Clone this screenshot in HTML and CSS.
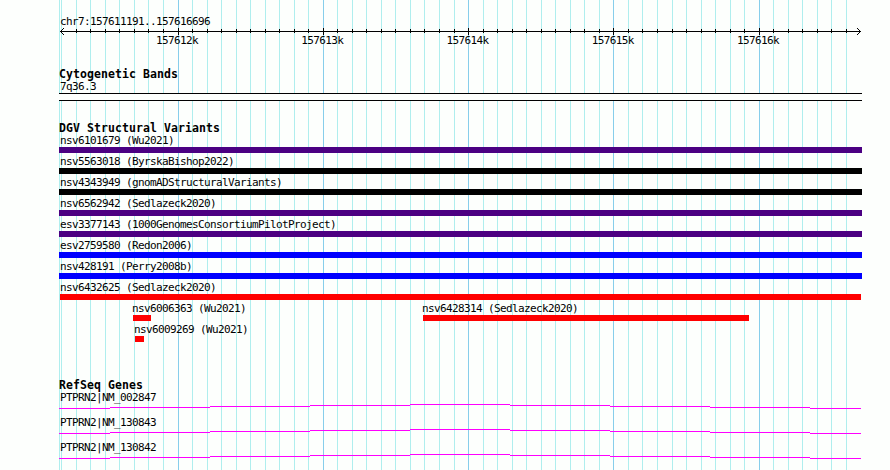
FILE: index.html
```html
<!DOCTYPE html>
<html lang="en">
<head>
<meta charset="utf-8">
<title>chr7:157611191..157616696</title>
<link rel="stylesheet" href="styles.css">
</head>
<body>
<main class="browser">
  <svg class="grid" width="890" height="470" shape-rendering="crispEdges" aria-hidden="true">
    <path class="minor" id="minor"/>
    <path class="major" id="major"/>
  </svg>

  <header class="ruler">
    <div class="label">chr7:157611191..157616696</div>
    <svg class="axis" width="803" height="9" shape-rendering="crispEdges" aria-hidden="true">
      <path id="ticks"/>
      <path d="M1 4.5H802"/>
      <path d="M2 3h1v1H2zM3 2h1v1H3zM4 1h1v1H4zM2 5h1v1H2zM3 6h1v1H3zM4 7h1v1H4zM800 3h1v1h-1zM799 2h1v1h-1zM798 1h1v1h-1zM800 5h1v1h-1zM799 6h1v1h-1zM798 7h1v1h-1z" class="head"/>
    </svg>
    <div class="scale label"><span>157612k</span><span>157613k</span><span>157614k</span><span>157615k</span><span>157616k</span></div>
  </header>

  <section class="track bands">
    <h2>Cytogenetic Bands</h2>
    <div class="label">7q36.3</div>
    <div class="band"></div>
  </section>

  <section class="track variants">
    <h2>DGV Structural Variants</h2>
    <div class="row"><div class="feature purple"><span class="label">nsv6101679 (Wu2021)</span></div></div>
    <div class="row"><div class="feature black"><span class="label">nsv5563018 (ByrskaBishop2022)</span></div></div>
    <div class="row"><div class="feature black"><span class="label">nsv4343949 (gnomADStructuralVariants)</span></div></div>
    <div class="row"><div class="feature purple"><span class="label">nsv6562942 (Sedlazeck2020)</span></div></div>
    <div class="row"><div class="feature purple"><span class="label">esv3377143 (1000GenomesConsortiumPilotProject)</span></div></div>
    <div class="row"><div class="feature blue"><span class="label">esv2759580 (Redon2006)</span></div></div>
    <div class="row"><div class="feature blue"><span class="label">nsv428191 (Perry2008b)</span></div></div>
    <div class="row"><div class="feature red" style="margin-left:1px;width:801px"><span class="label flush">nsv6432625 (Sedlazeck2020)</span></div></div>
    <div class="row"><div class="feature red" style="margin-left:74px;width:18px"><span class="label hang">nsv6006363 (Wu2021)</span></div><div class="feature red" style="margin-left:272px;width:326px"><span class="label hang">nsv6428314 (Sedlazeck2020)</span></div></div>
    <div class="row"><div class="feature red" style="margin-left:76px;width:9px"><span class="label hang">nsv6009269 (Wu2021)</span></div></div>
  </section>

  <section class="track genes">
    <h2>RefSeq Genes</h2>
    <div class="gene"><div class="label">PTPRN2|NM_002847</div><svg width="803" height="7" shape-rendering="crispEdges"><path class="intron"/></svg></div>
    <div class="gene"><div class="label">PTPRN2|NM_130843</div><svg width="803" height="7" shape-rendering="crispEdges"><path class="intron"/></svg></div>
    <div class="gene"><div class="label">PTPRN2|NM_130842</div><svg width="803" height="7" shape-rendering="crispEdges"><path class="intron"/></svg></div>
  </section>
</main>
<script src="tracks.js"></script>
</body>
</html>
```
FILE: styles.css
```css
* { box-sizing: border-box; }
body {
  margin: 0;
  background: #fdfffd;
  color: #000;
}
.browser {
  position: relative;
  width: 890px;
  height: 470px;
  padding: 15px 28px 0 59px;
  overflow: hidden;
}
.grid {
  position: absolute;
  left: 0;
  top: 0;
}
.minor { stroke: #afeeee; }
.major { stroke: #87ceeb; }
svg { display: block; }
.ruler, .track { position: relative; }
.label {
  display: block;
  height: 12px;
  padding-left: 1px;
  font: 11px/12px "DejaVu Sans Mono", monospace;
  letter-spacing: -0.622px;
  white-space: pre;
}
h2 {
  height: 13px;
  margin: 0;
  font: bold 11.5px/13px "DejaVu Sans Mono", monospace;
  letter-spacing: 0.077px;
  white-space: pre;
}
.axis { stroke: #000; }
.head { fill: #000; stroke: none; }
.ruler {
  height: 53px;
  padding-top: 1px;
}
.ruler .label:first-child { height: 11px; }
.ruler .scale {
  display: flex;
  justify-content: space-between;
  width: 623px;
  margin: -1px 0 0 97px;
  padding: 0;
}
.bands { height: 54px; }
.band {
  width: 803px;
  height: 8px;
  border: solid #000;
  border-width: 1px 0;
  background: #fdfffd;
}
.variants { height: 257px; }
.row {
  display: flex;
  height: 21px;
}
.feature {
  width: 803px;
  height: 18px;
  border-bottom: 6px solid;
}
.flush { padding-left: 0; }
.hang {
  padding-left: 0;
  margin-left: -1px;
}
.purple { border-color: #4b0082; }
.black { border-color: #000; }
.blue { border-color: #00f; }
.red { border-color: #f00; }
.gene { height: 25px; }
.intron { fill: none; stroke: #f0f; }
```
FILE: tracks.js
```js
const major = [178, 323, 468, 613, 759];
const minor = [76, 90, 105, 119, 134, 148, 163, 192, 207, 221, 236, 250, 265, 279, 294, 308,
  337, 352, 366, 381, 395, 410, 424, 439, 454, 483, 497, 512, 526, 541, 555, 570, 584, 599,
  628, 642, 657, 672, 686, 701, 715, 730, 744, 773, 788, 802, 817, 831, 846];
const left = 59;
const columns = (xs, y, h) => xs.map(x => `M${x + 0.5} ${y}v${h}`).join('');

document.getElementById('minor').setAttribute('d', columns([59, 61, ...minor], 0, 470));
document.getElementById('major').setAttribute('d', columns(major, 0, 470));
document.getElementById('ticks').setAttribute('d',
  columns(minor.map(x => x - left), 2, 4) + columns(major.map(x => x - left), 1, 7));

// Introns are drawn as shallow arches, one pixel per step.
const steps = [[0, 51, 4], [51, 151, 3], [151, 251, 2], [251, 351, 1], [351, 451, 0],
  [451, 551, 1], [551, 651, 2], [651, 751, 3], [751, 802, 4]];
const arch = steps.map(([a, b, y]) => `M${a} ${y + 0.5}H${b}`).join('');
document.querySelectorAll('.intron').forEach(p => p.setAttribute('d', arch));
```
